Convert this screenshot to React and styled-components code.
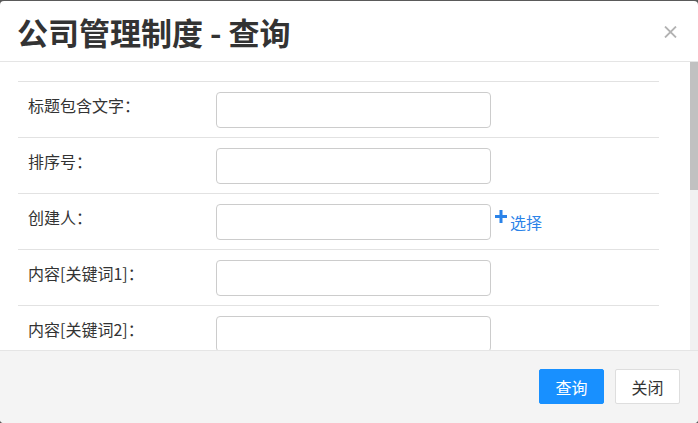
import React from 'react';
import styled, { createGlobalStyle } from 'styled-components';

const GlobalStyle = createGlobalStyle`
  html, body {
    margin: 0;
    padding: 0;
    background: #5a5a5a;
  }
  body {
    font-family: "Noto Sans CJK SC", "Noto Sans", sans-serif;
    color: #333;
  }
`;

const Modal = styled.div`
  margin-top: 1px;
  height: 422px;
  background: #fff;
  border-radius: 4px;
  display: flex;
  flex-direction: column;
  overflow: hidden;
`;

const Header = styled.div`
  box-sizing: border-box;
  flex: 0 0 61px;
  display: flex;
  align-items: center;
  justify-content: space-between;
  padding: 0 21px 0 17px;
  border-bottom: 1px solid #e5e5e5;
`;

const Title = styled.h3`
  margin: 0;
  font-size: 31px;
  font-weight: 700;
  color: #333;
  line-height: 1;
  padding-top: 1px;
`;

const Close = styled.button`
  border: none;
  background: none;
  padding: 0;
  cursor: pointer;
  display: flex;
  margin-top: 1px;
`;

const BodyWrap = styled.div`
  flex: 1;
  min-height: 0;
  display: flex;
`;

const Body = styled.div`
  flex: 1;
  overflow-y: auto;
  scrollbar-width: none;
  padding: 19px 31px 13px 18px;

  &::-webkit-scrollbar {
    display: none;
  }
`;

const ScrollTrack = styled.div`
  flex: 0 0 8px;
  background: #f1f1f1;
`;

const ScrollThumb = styled.div`
  height: 128px;
  background: #c1c1c1;
`;

const Table = styled.table`
  width: 100%;
  border-collapse: collapse;
`;

const Row = styled.tr`
  border-top: 1px solid #e2e2e2;
`;

const LabelCell = styled.td`
  width: 168px;
  padding: 13px 10px 0;
  vertical-align: top;
  font-size: 16px;
  line-height: 20px;
  color: #333;
  white-space: nowrap;
`;

const FieldCell = styled.td`
  padding: 10px 10px 9px;
  vertical-align: top;
  white-space: nowrap;
`;

const Input = styled.input`
  box-sizing: border-box;
  width: 275px;
  height: 36px;
  border: 1px solid #ccc;
  border-radius: 4px;
  padding: 0 8px;
  font-size: 16px;
  vertical-align: top;
  outline: none;
`;

const PickLink = styled.a`
  display: inline-flex;
  align-items: flex-start;
  margin-left: 4px;
  color: #2b83e8;
  font-size: 16px;
  line-height: 20px;
  text-decoration: none;
  padding-top: 5px;
  cursor: pointer;

  svg {
    margin: 0 3px 0 0;
  }
  span {
    padding-top: 2px;
  }
`;

const Footer = styled.div`
  box-sizing: border-box;
  flex: 0 0 73px;
  border-top: 1px solid #e5e5e5;
  background: #f4f4f4;
  display: flex;
  justify-content: flex-end;
  align-items: flex-start;
  gap: 11px;
  padding: 18px 18px 0 0;
`;

const Button = styled.button`
  box-sizing: border-box;
  width: 65px;
  height: 35px;
  border-radius: 2px;
  font-family: inherit;
  font-size: 16px;
  cursor: pointer;
  border: 1px solid ${(p) => (p.$primary ? '#1890ff' : '#dedede')};
  background: ${(p) => (p.$primary ? '#1890ff' : '#fff')};
  color: ${(p) => (p.$primary ? '#fff' : '#333')};
`;

const fields = [
  { label: '标题包含文字：' },
  { label: '排序号：' },
  { label: '创建人：', pick: true },
  { label: '内容[关键词1]：' },
  { label: '内容[关键词2]：' },
];

export default function App() {
  return (
    <>
      <GlobalStyle />
      <Modal>
        <Header>
          <Title>公司管理制度 - 查询</Title>
          <Close aria-label='关闭'>
            <svg width='13' height='12' viewBox='0 0 13 12'>
              <path d='M1 0.5 L12 11.5 M12 0.5 L1 11.5' stroke='#b3b3b3' strokeWidth='1.8' />
            </svg>
          </Close>
        </Header>
        <BodyWrap>
          <Body>
            <Table>
              <tbody>
                {fields.map((f) => (
                  <Row key={f.label}>
                    <LabelCell>{f.label}</LabelCell>
                    <FieldCell>
                      <Input type='text' />
                      {f.pick && (
                        <PickLink>
                          <svg width='12' height='13' viewBox='0 0 12 13'>
                            <path d='M6 0 V13 M0 6.5 H12' stroke='#2b83e8' strokeWidth='3' />
                          </svg>
                          <span>选择</span>
                        </PickLink>
                      )}
                    </FieldCell>
                  </Row>
                ))}
              </tbody>
            </Table>
          </Body>
          <ScrollTrack>
            <ScrollThumb />
          </ScrollTrack>
        </BodyWrap>
        <Footer>
          <Button $primary>查询</Button>
          <Button>关闭</Button>
        </Footer>
      </Modal>
    </>
  );
}
